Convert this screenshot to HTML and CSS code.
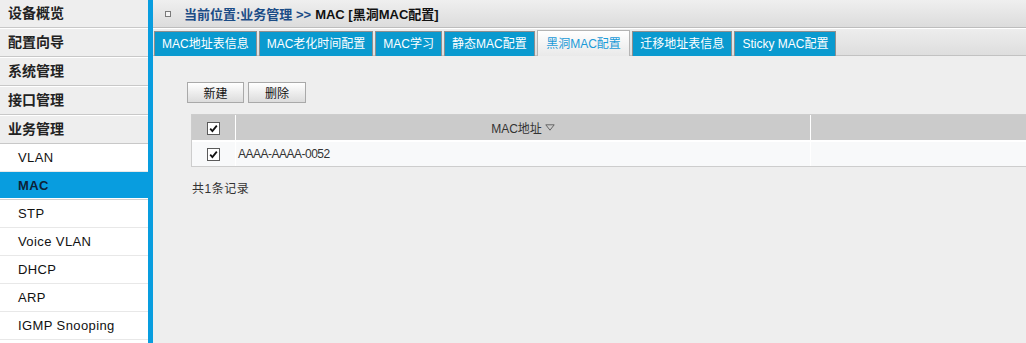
FILE: index.html
```html
<!DOCTYPE html>
<html lang="zh-CN">
<head>
<meta charset="utf-8">
<title>MAC [黑洞MAC配置]</title>
<link rel="stylesheet" href="styles.css">
</head>
<body>
<div class="page">
  <aside class="sidebar">
    <div class="nav-group">设备概览</div>
    <div class="nav-group">配置向导</div>
    <div class="nav-group">系统管理</div>
    <div class="nav-group">接口管理</div>
    <div class="nav-group">业务管理</div>
    <ul class="subnav">
      <li>VLAN</li>
      <li class="active">MAC</li>
      <li>STP</li>
      <li>Voice VLAN</li>
      <li>DHCP</li>
      <li>ARP</li>
      <li>IGMP Snooping</li>
    </ul>
  </aside>
  <main class="main">
    <div class="crumb">
      <span class="crumb-icon"></span>
      <span class="crumb-path">当前位置:业务管理 &gt;&gt;</span>
      <span class="crumb-cur">MAC [黑洞MAC配置]</span>
    </div>
    <nav class="tabs">
      <span class="tab">MAC地址表信息</span>
      <span class="tab">MAC老化时间配置</span>
      <span class="tab">MAC学习</span>
      <span class="tab">静态MAC配置</span>
      <span class="tab active">黑洞MAC配置</span>
      <span class="tab">迁移地址表信息</span>
      <span class="tab">Sticky MAC配置</span>
    </nav>
    <section class="content">
      <div class="toolbar">
        <button class="btn" type="button">新建</button>
        <button class="btn btn-wide" type="button">删除</button>
      </div>
      <table class="grid">
        <thead>
          <tr>
            <th class="c-check"><span class="check"><svg viewBox="0 0 11 11" width="11" height="11"><path d="M2.2 5.6 L4.4 8 L8.8 2.6" fill="none" stroke="#111" stroke-width="1.8"/></svg></span></th>
            <th class="c-mac">MAC地址<svg class="sort" viewBox="0 0 10 7" width="10" height="7"><path d="M0.8 0.8 H9.2 L5 6.2 Z" fill="none" stroke="#666" stroke-width="1"/></svg></th>
            <th class="c-rest"></th>
          </tr>
        </thead>
        <tbody>
          <tr>
            <td class="c-check"><span class="check"><svg viewBox="0 0 11 11" width="11" height="11"><path d="M2.2 5.6 L4.4 8 L8.8 2.6" fill="none" stroke="#111" stroke-width="1.8"/></svg></span></td>
            <td class="c-mac-val">AAAA-AAAA-0052</td>
            <td class="c-rest"></td>
          </tr>
        </tbody>
      </table>
      <div class="count">共1条记录</div>
    </section>
  </main>
</div>
</body>
</html>
```

FILE: styles.css
```css
html, body {
  margin: 0;
  padding: 0;
}

body {
  font-family: "Liberation Sans", "Noto Sans CJK SC", sans-serif;
  background: #eeeeee;
  color: #222;
}

.page {
  display: flex;
  height: 100vh;
  overflow: hidden;
}

/* ---------- sidebar ---------- */
.sidebar {
  width: 148px;
  flex: none;
  background: #ffffff;
  border-right: 5px solid #089ddf;
  overflow: hidden;
}

.nav-group {
  height: 27px;
  line-height: 27px;
  padding-left: 8px;
  font-size: 14px;
  font-weight: bold;
  color: #222;
  background: #eeeeee;
  border-top: 1px solid #ffffff;
  border-bottom: 1px solid #c8c8c8;
}

.nav-group:first-child {
  border-top: 0;
}

.subnav {
  list-style: none;
  margin: 0;
  padding: 0;
}

.subnav li {
  height: 27px;
  line-height: 27px;
  padding-left: 18px;
  font-size: 13px;
  letter-spacing: 0.4px;
  color: #111;
  border-bottom: 1px solid #e8e8e8;
}

.subnav li.active {
  background: #089ddf;
  font-weight: bold;
  color: #0e2236;
  box-shadow: inset 0 -1px 0 #ffffff;
  border-bottom-color: #d0d0d0;
}

/* ---------- main ---------- */
.main {
  flex: 1;
  min-width: 0;
  overflow: hidden;
}

.crumb {
  height: 27px;
  display: flex;
  align-items: center;
  padding-left: 12px;
  background: linear-gradient(#efefef, #dcdcdc);
  border-bottom: 1px solid #bdbdbd;
  font-size: 13px;
  font-weight: bold;
  white-space: nowrap;
}

.crumb-icon {
  width: 4px;
  height: 4px;
  border: 1px solid #7a7a7a;
  background: #f4f4f4;
  margin-right: 13px;
}

.crumb-path {
  color: #1b4c86;
}

.crumb-cur {
  color: #111;
  margin-left: 4px;
}

.tabs {
  display: flex;
  align-items: flex-end;
  gap: 2px;
  height: 26px;
  padding-left: 1px;
  border-top: 1px solid #ffffff;
  border-bottom: 1px solid #c2c2c2;
  background: linear-gradient(#ededed, #dedede);
}

.tab {
  height: 24px;
  line-height: 24px;
  padding: 0 7px;
  margin-bottom: -1px;
  font-size: 12px;
  color: #ffffff;
  background: #0a9acf;
  border: 1px solid #8f8f8f;
  border-bottom: 0;
  white-space: nowrap;
}

.tab.active {
  height: 25px;
  line-height: 26px;
  padding: 0 8.5px;
  color: #1a9ad8;
  background: linear-gradient(#ffffff, #e9e9e9);
  border-color: #b4b4b4;
}

/* ---------- content ---------- */
.content {
  padding: 26px 0 0 34px;
}

.toolbar {
  display: flex;
  gap: 4px;
}

.btn {
  box-sizing: border-box;
  width: 57px;
  height: 21px;
  padding: 0;
  border: 1px solid #a9a9a9;
  background: linear-gradient(#ffffff, #dcdcdc);
  font-family: "Liberation Sans", "Noto Sans CJK SC", sans-serif;
  font-size: 12px;
  color: #111;
}

.btn-wide {
  width: 58px;
}

.grid {
  margin: 11px 0 0 4px;
  width: 900px;
  table-layout: fixed;
  border-collapse: separate;
  border-spacing: 0;
  border: 1px solid #cdcdcd;
  background: #ffffff;
  font-size: 12px;
  color: #333;
}

.grid th,
.grid td {
  padding: 0;
  border-right: 1px solid #ffffff;
  vertical-align: middle;
}

.grid thead th {
  height: 25px;
  background: #cbcbcb;
  border-bottom: 2px solid #ffffff;
  font-weight: normal;
}

.grid tbody td {
  height: 24px;
  background: #f8f9fa;
}

.grid .c-check {
  width: 43px;
  text-align: center;
}

.grid .c-mac {
  width: 574px;
  text-align: center;
  color: #333;
}

.c-mac-val {
  padding-left: 2px !important;
  letter-spacing: -0.5px;
  white-space: nowrap;
}

.sort {
  margin-left: 3px;
  vertical-align: 2px;
}

.check {
  display: inline-block;
  width: 11px;
  height: 11px;
  border: 1px solid #5a5a5a;
  background: #ffffff;
  vertical-align: middle;
  line-height: 0;
}

.check svg {
  display: block;
}

.count {
  margin: 12px 0 0 5px;
  font-size: 12px;
  letter-spacing: 0.5px;
  color: #333;
}
```
